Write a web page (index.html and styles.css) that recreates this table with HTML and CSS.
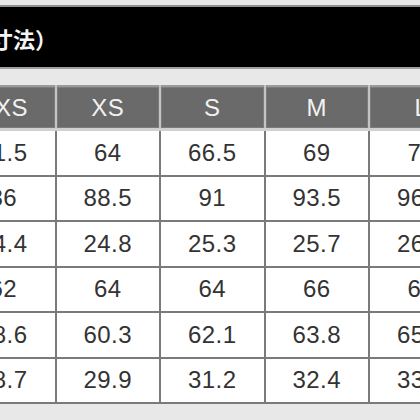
FILE: index.html
```html
<!DOCTYPE html>
<html lang="ja">
<head>
<meta charset="utf-8">
<link rel="stylesheet" href="styles.css">
</head>
<body>
<div class="sheet">
  <div class="banner"><span class="title">寸法）</span></div>
  <div class="table-wrap">
    <table class="sizes">
      <colgroup><col><col><col><col><col><col></colgroup>
      <thead>
        <tr><th>XXS</th><th>XS</th><th>S</th><th>M</th><th>L</th><th>XL</th></tr>
      </thead>
      <tbody>
        <tr><td>61.5</td><td>64</td><td>66.5</td><td>69</td><td>72</td><td>74.5</td></tr>
        <tr><td>86</td><td>88.5</td><td>91</td><td>93.5</td><td>96.5</td><td>99</td></tr>
        <tr><td>24.4</td><td>24.8</td><td>25.3</td><td>25.7</td><td>26.2</td><td>26.6</td></tr>
        <tr><td>62</td><td>64</td><td>64</td><td>66</td><td>68</td><td>68</td></tr>
        <tr><td>58.6</td><td>60.3</td><td>62.1</td><td>63.8</td><td>65.5</td><td>67.2</td></tr>
        <tr><td>28.7</td><td>29.9</td><td>31.2</td><td>32.4</td><td>33.6</td><td>34.9</td></tr>
      </tbody>
    </table>
  </div>
</div>
</body>
</html>
```
FILE: styles.css
```css
html, body {
  margin: 0;
  padding: 0;
}
body {
  width: 420px;
  height: 420px;
  overflow: hidden;
  background: #e8e8e8;
}
.sheet {
  padding-top: 5px;
}
.banner {
  height: 60px;
  background: #000;
  border-top: 2px solid #8f8f8f;
  border-bottom: 2px solid #a0a0a0;
  display: flex;
  align-items: center;
  overflow: hidden;
}
.title {
  color: #f4f4f4;
  font-family: "Noto Sans CJK JP", sans-serif;
  font-weight: bold;
  font-size: 22px;
  margin-left: -9px;
  margin-top: 2px;
}
.table-wrap {
  padding-top: 16px;
}
.sizes {
  border-collapse: collapse;
  table-layout: fixed;
  width: 627px;
  margin-left: -50px;
  font-family: "Liberation Sans", Arial, sans-serif;
  font-size: 24px;
  letter-spacing: 0.4px;
}
.sizes col {
  width: 104.5px;
}
.sizes th {
  height: 41px;
  padding: 0;
  background: #6a6a6a;
  color: #f2f2f2;
  font-weight: normal;
  border: 2px solid #c4c4c4;
  border-top-color: #9a9a9a;
  border-bottom: 3px solid #d0d0d0;
  box-shadow: inset 0 0 0 1px #7c7c7c;
}
.sizes td {
  height: 43.5px;
  padding: 0;
  text-align: center;
  color: #333;
  background: #fff;
  border: 2px solid #7a7a7a;
}
```
